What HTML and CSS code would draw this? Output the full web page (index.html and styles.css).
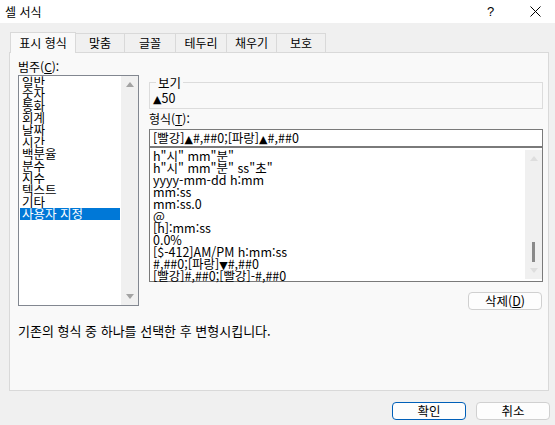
FILE: index.html
```html
<!DOCTYPE html>
<html lang="ko">
<head>
<meta charset="utf-8">
<title>셀 서식</title>
<link rel="stylesheet" href="styles.css">
</head>
<body>
<div class="window">
  <div class="titlebar">
    <span class="title">셀 서식</span>
    <span class="help">?</span>
    <span class="close"><svg width="11" height="11" viewBox="0 0 11 11"><path d="M0.5 0.5 L10.5 10.5 M10.5 0.5 L0.5 10.5" stroke="#000" stroke-width="1" fill="none"/></svg></span>
  </div>
  <div class="tabs">
    <div class="tab active">표시 형식</div>
    <div class="tab">맞춤</div>
    <div class="tab">글꼴</div>
    <div class="tab">테두리</div>
    <div class="tab">채우기</div>
    <div class="tab">보호</div>
  </div>
  <div class="panel">
    <div class="cols">
      <div class="left">
        <div class="label">범주(<u>C</u>):</div>
        <div class="listbox cat">
          <ul class="items">
            <li>일반</li>
            <li>숫자</li>
            <li>통화</li>
            <li>회계</li>
            <li>날짜</li>
            <li>시간</li>
            <li>백분율</li>
            <li>분수</li>
            <li>지수</li>
            <li>텍스트</li>
            <li>기타</li>
            <li class="sel">사용자 지정</li>
          </ul>
          <div class="vscroll">
            <span class="arr up"></span>
            <span class="arr down"></span>
          </div>
        </div>
      </div>
      <div class="right">
        <fieldset class="sample">
          <legend>보기</legend>
          <div class="sample-val"><span class="tri">▲</span>50</div>
        </fieldset>
        <div class="label fmt-label">형식(<u>T</u>):</div>
        <div class="input">[빨강]<span class="tri">▲</span>#,##0;[파랑]<span class="tri">▲</span>#,##0</div>
        <div class="listbox fmt">
          <ul class="items">
            <li>h"시" mm"분"</li>
            <li>h"시" mm"분" ss"초"</li>
            <li>yyyy-mm-dd h:mm</li>
            <li>mm:ss</li>
            <li>mm:ss.0</li>
            <li>@</li>
            <li>[h]:mm:ss</li>
            <li>0.0%</li>
            <li>[$-412]AM/PM h:mm:ss</li>
            <li>#,##0;[파랑]<span class="tri">▼</span>#,##0</li>
            <li>[빨강]#,##0;[빨강]-#,##0</li>
          </ul>
          <div class="vscroll light">
            <span class="arr up"></span>
            <span class="thumb"></span>
            <span class="arr down"></span>
          </div>
        </div>
        <div class="btnrow">
          <button class="btn del">삭제(<u>D</u>)</button>
        </div>
      </div>
    </div>
    <p class="hint">기존의 형식 중 하나를 선택한 후 변형시킵니다.</p>
  </div>
  <div class="footer">
    <button class="btn primary">확인</button>
    <button class="btn">취소</button>
  </div>
</div>
</body>
</html>
```
FILE: styles.css
```css
* { box-sizing: border-box; }
html, body {
  margin: 0;
  padding: 0;
}
body {
  width: 555px;
  height: 425px;
  overflow: hidden;
  background: #f0f0f0;
  font-family: "Noto Sans CJK KR", "Noto Sans", sans-serif;
  font-size: 12px;
  color: #000;
}
.window {
  width: 555px;
  height: 425px;
  display: flex;
  flex-direction: column;
}
.titlebar {
  height: 23px;
  background: #fff;
  display: flex;
  align-items: center;
  padding-left: 5px;
}
.title {
  flex: 1;
  font-size: 12px;
  line-height: 14px;
}
.help {
  width: 7px;
  margin-right: 36px;
  font-family: "Liberation Sans", sans-serif;
  font-size: 13px;
  line-height: 14px;
}
.close {
  width: 25px;
  display: flex;
  align-items: center;
}
.tabs {
  margin-top: 9px;
  height: 20px;
  display: flex;
  align-items: flex-end;
  padding-left: 10px;
}
.tab {
  width: 50px;
  height: 19px;
  border: 1px solid #d9d9d9;
  border-bottom: none;
  border-left: none;
  background: #f0f0f0;
  text-align: center;
  font-size: 12px;
  line-height: 18px;
}
.tab:nth-child(2) { width: 49px; }
.tab:nth-child(3) { width: 51px; }
.tab:nth-child(4) { width: 51px; }
.tab:nth-child(6) { width: 49px; }
.tab.active {
  width: 66px;
  height: 21px;
  margin-bottom: -1px;
  background: #f9f9f9;
  border-left: 1px solid #d9d9d9;
  line-height: 19px;
  position: relative;
  z-index: 1;
}
.panel {
  width: 540px;
  height: 339px;
  margin-left: 9px;
  background: #f9f9f9;
  border: 1px solid #d9d9d9;
  padding: 5px 0 0 8px;
}
.cols {
  display: grid;
  grid-template-columns: 121px 394px;
  column-gap: 10px;
}
.label {
  height: 17px;
  line-height: 17px;
}
.listbox {
  border: 1px solid #828790;
  background: #fff;
  display: flex;
}
.listbox.cat {
  height: 231px;
}
.items {
  list-style: none;
  margin: 0;
  padding: 0 1px;
  flex: 1;
}
.items li {
  height: 12px;
  line-height: 12px;
  white-space: nowrap;
  padding-left: 2px;
  font-size: 12.5px;
}
.items li.sel {
  background: #0078d7;
  color: #fff;
}
.tri {
  font-family: "DejaVu Sans", sans-serif;
  font-size: 11px;
}
.vscroll {
  width: 17px;
  background: #f0f0f0;
  display: flex;
  flex-direction: column;
  align-items: center;
  justify-content: space-between;
  padding: 6px 0;
}
.arr {
  width: 0;
  height: 0;
  border-left: 4px solid transparent;
  border-right: 4px solid transparent;
}
.arr.up { border-bottom: 5px solid #a3a3a3; }
.arr.down { border-top: 5px solid #a3a3a3; }
.vscroll.light {
  margin: 2px 0;
}
.vscroll.light .arr.up { border-bottom-color: #dedede; }
.vscroll.light .arr.down { border-top-color: #dedede; }
.thumb {
  width: 3px;
  height: 20px;
  background: #8a8a8a;
  margin-top: auto;
  margin-bottom: 6px;
}
.right {
  padding-top: 18px;
}
.sample {
  margin: 0;
  padding: 2px 4px 3px 3px;
  border: 1px solid #dcdcdc;
  height: 33px;
  min-width: 0;
}
.sample legend {
  padding: 0 2px;
  margin-left: 3px;
  height: 13px;
  line-height: 13px;
  font-size: 12.5px;
}
.sample-val {
  font-size: 12.5px;
  line-height: 14px;
}
.fmt-label {
  height: 20px;
  line-height: 20px;
}
.input {
  height: 18px;
  border: 1px solid #7a7a7a;
  background: #fff;
  padding-left: 3px;
  line-height: 16px;
  font-size: 12.5px;
  white-space: nowrap;
}
.listbox.fmt {
  height: 135px;
  border-color: #7a7a7a;
}
.listbox.fmt .items { padding-top: 2px; }
.btnrow {
  display: flex;
  justify-content: flex-end;
  margin-top: 10px;
  padding-right: 1px;
}
.btn {
  font-family: inherit;
  font-size: 12.5px;
  width: 74px;
  height: 18px;
  padding: 0;
  line-height: 16px;
  border: 1px solid #d0d0d0;
  border-radius: 4px;
  background: #fdfdfd;
  color: #000;
}
.btn.primary {
  border-color: #005fb8;
}
.hint {
  margin: 14px 0 0;
  font-size: 13px;
  line-height: 14px;
}
.footer {
  display: flex;
  justify-content: flex-end;
  gap: 10px;
  padding-right: 5px;
  margin-top: 11px;
}
```
